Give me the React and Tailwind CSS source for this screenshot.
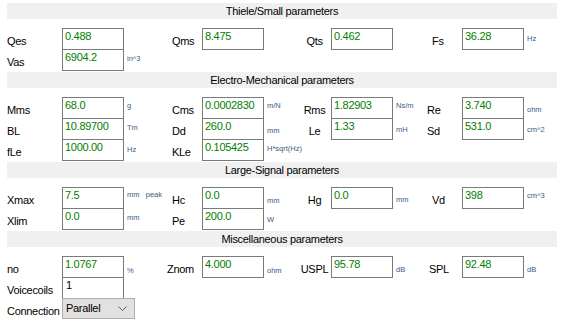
const sections = [
  {
    title: 'Thiele/Small parameters',
    rows: [
      [['Qes', '0.488'], ['Qms', '8.475'], ['Qts', '0.462'], ['Fs', '36.28', 'Hz', 'pt-[7px]']],
      [['Vas', '6904.2', 'in^3', 'pt-[6px]']],
    ],
  },
  {
    title: 'Electro-Mechanical parameters',
    rows: [
      [['Mms', '68.0', 'g', 'pt-[5px]'], ['Cms', '0.0002830', 'm/N', 'pt-[5px]'], ['Rms', '1.82903', 'Ns/m', 'pt-[5px]'], ['Re', '3.740', 'ohm', 'pt-[9px]']],
      [['BL', '10.89700', 'Tm', 'pt-[6px]'], ['Dd', '260.0', 'mm', 'pt-[9px]'], ['Le', '1.33', 'mH', 'pt-[8px]'], ['Sd', '531.0', 'cm^2', 'pt-[8px]']],
      [['fLe', '1000.00', 'Hz', 'pt-[7px]'], ['KLe', '0.105425', 'H*sqrt(Hz)', 'pt-[6px]']],
    ],
  },
  {
    title: 'Large-Signal parameters',
    rows: [
      [['Xmax', '7.5', 'mm\u00a0\u00a0\u00a0peak', 'pt-[4px]'], ['Hc', '0.0', 'mm', 'pt-[10px]'], ['Hg', '0.0', 'mm', 'pt-[9px]'], ['Vd', '398', 'cm^3', 'pt-[5px]']],
      [['Xlim', '0.0', 'mm', 'pt-[6px]'], ['Pe', '200.0', 'W', 'pt-[8px]']],
    ],
  },
  {
    title: 'Miscellaneous parameters',
    rows: [
      [['no', '1.0767', '%', 'pt-[11px]'], ['Znom', '4.000', 'ohm', 'pt-[11px]'], ['USPL', '95.78', 'dB', 'pt-[10px]'], ['SPL', '92.48', 'dB', 'pt-[10px]']],
    ],
  },
]

// label alignment per column
const labelCls = [
  'text-left',
  'text-left pl-[10px]',
  'text-center',
  'text-left pl-[8px]',
]

function Field({ cell, col, section }) {
  const [label, value, unit, unitPt] = cell
  let lc = labelCls[col]
  if (label === 'Znom') lc = 'text-left pl-[5px]'
  if (section === 1 && col === 3) lc = 'text-left pl-[3px]'
  if (label === 'SPL') lc = 'text-left pl-[5px]'
  return (
    <>
      <div className={`pt-[7px] leading-[13px] whitespace-nowrap ${lc}`}>{label}</div>
      <div className="h-[22px] border border-[#7a7a7a] bg-white pl-[2px] pt-[1px] leading-[13px] text-[#008000]">{value}</div>
      <div className={`pl-[3px] text-[7.5px] leading-[8px] tracking-normal whitespace-nowrap text-[#3d5a85] ${unitPt || ''}`}>{unit}</div>
    </>
  )
}

function Section({ title, rows, index }) {
  return (
    <div className={index === 0 ? '' : 'mt-[2px]'}>
      <div className="mx-[7px] flex h-[16px] items-center justify-center bg-[#f0f0f0] leading-[13px]">{title}</div>
      <div className="ml-[7px] mt-[9px] grid auto-rows-[21px] grid-cols-[55px_62px_38px_40px_62px_34px_33px_62px_31px_38px_62px_33px]">
        {rows.map((row, r) =>
          row.map((cell, c) => <Field key={`${r}-${c}`} cell={cell} col={c} section={index} />).concat(
            row.length < 4 ? [<div key={`pad-${r}`} style={{ gridColumn: `span ${(4 - row.length) * 3}` }} />] : []
          )
        )}
      </div>
    </div>
  )
}

export default function App() {
  return (
    <div className="h-[328px] w-[564px] overflow-hidden bg-white pt-[3px] font-['Liberation_Sans',Arial,sans-serif] text-[11px] tracking-[-0.3px] text-black">
      {sections.map((s, i) => (
        <Section key={s.title} title={s.title} rows={s.rows} index={i} />
      ))}
      <div className="ml-[7px] grid auto-rows-[21px] grid-cols-[55px_62px]">
        <div className="pt-[7px] leading-[13px]">Voicecoils</div>
        <div className="h-[21px] border-x border-[#7a7a7a] pl-[3px] pt-[2px] leading-[13px]">1</div>
        <div className="pt-[7px] leading-[13px]">Connection</div>
        <div className="flex h-[21px] w-[73px] items-center justify-between border border-[#adadad] bg-[#e1e1e1] pl-[3px] pr-[7px] leading-[13px]">
          <span>Parallel</span>
          <svg width="9" height="5" viewBox="0 0 9 5" fill="none">
            <path d="M0.5 0.5 L4.5 4.5 L8.5 0.5" stroke="#606060" strokeWidth="1" />
          </svg>
        </div>
      </div>
    </div>
  )
}
